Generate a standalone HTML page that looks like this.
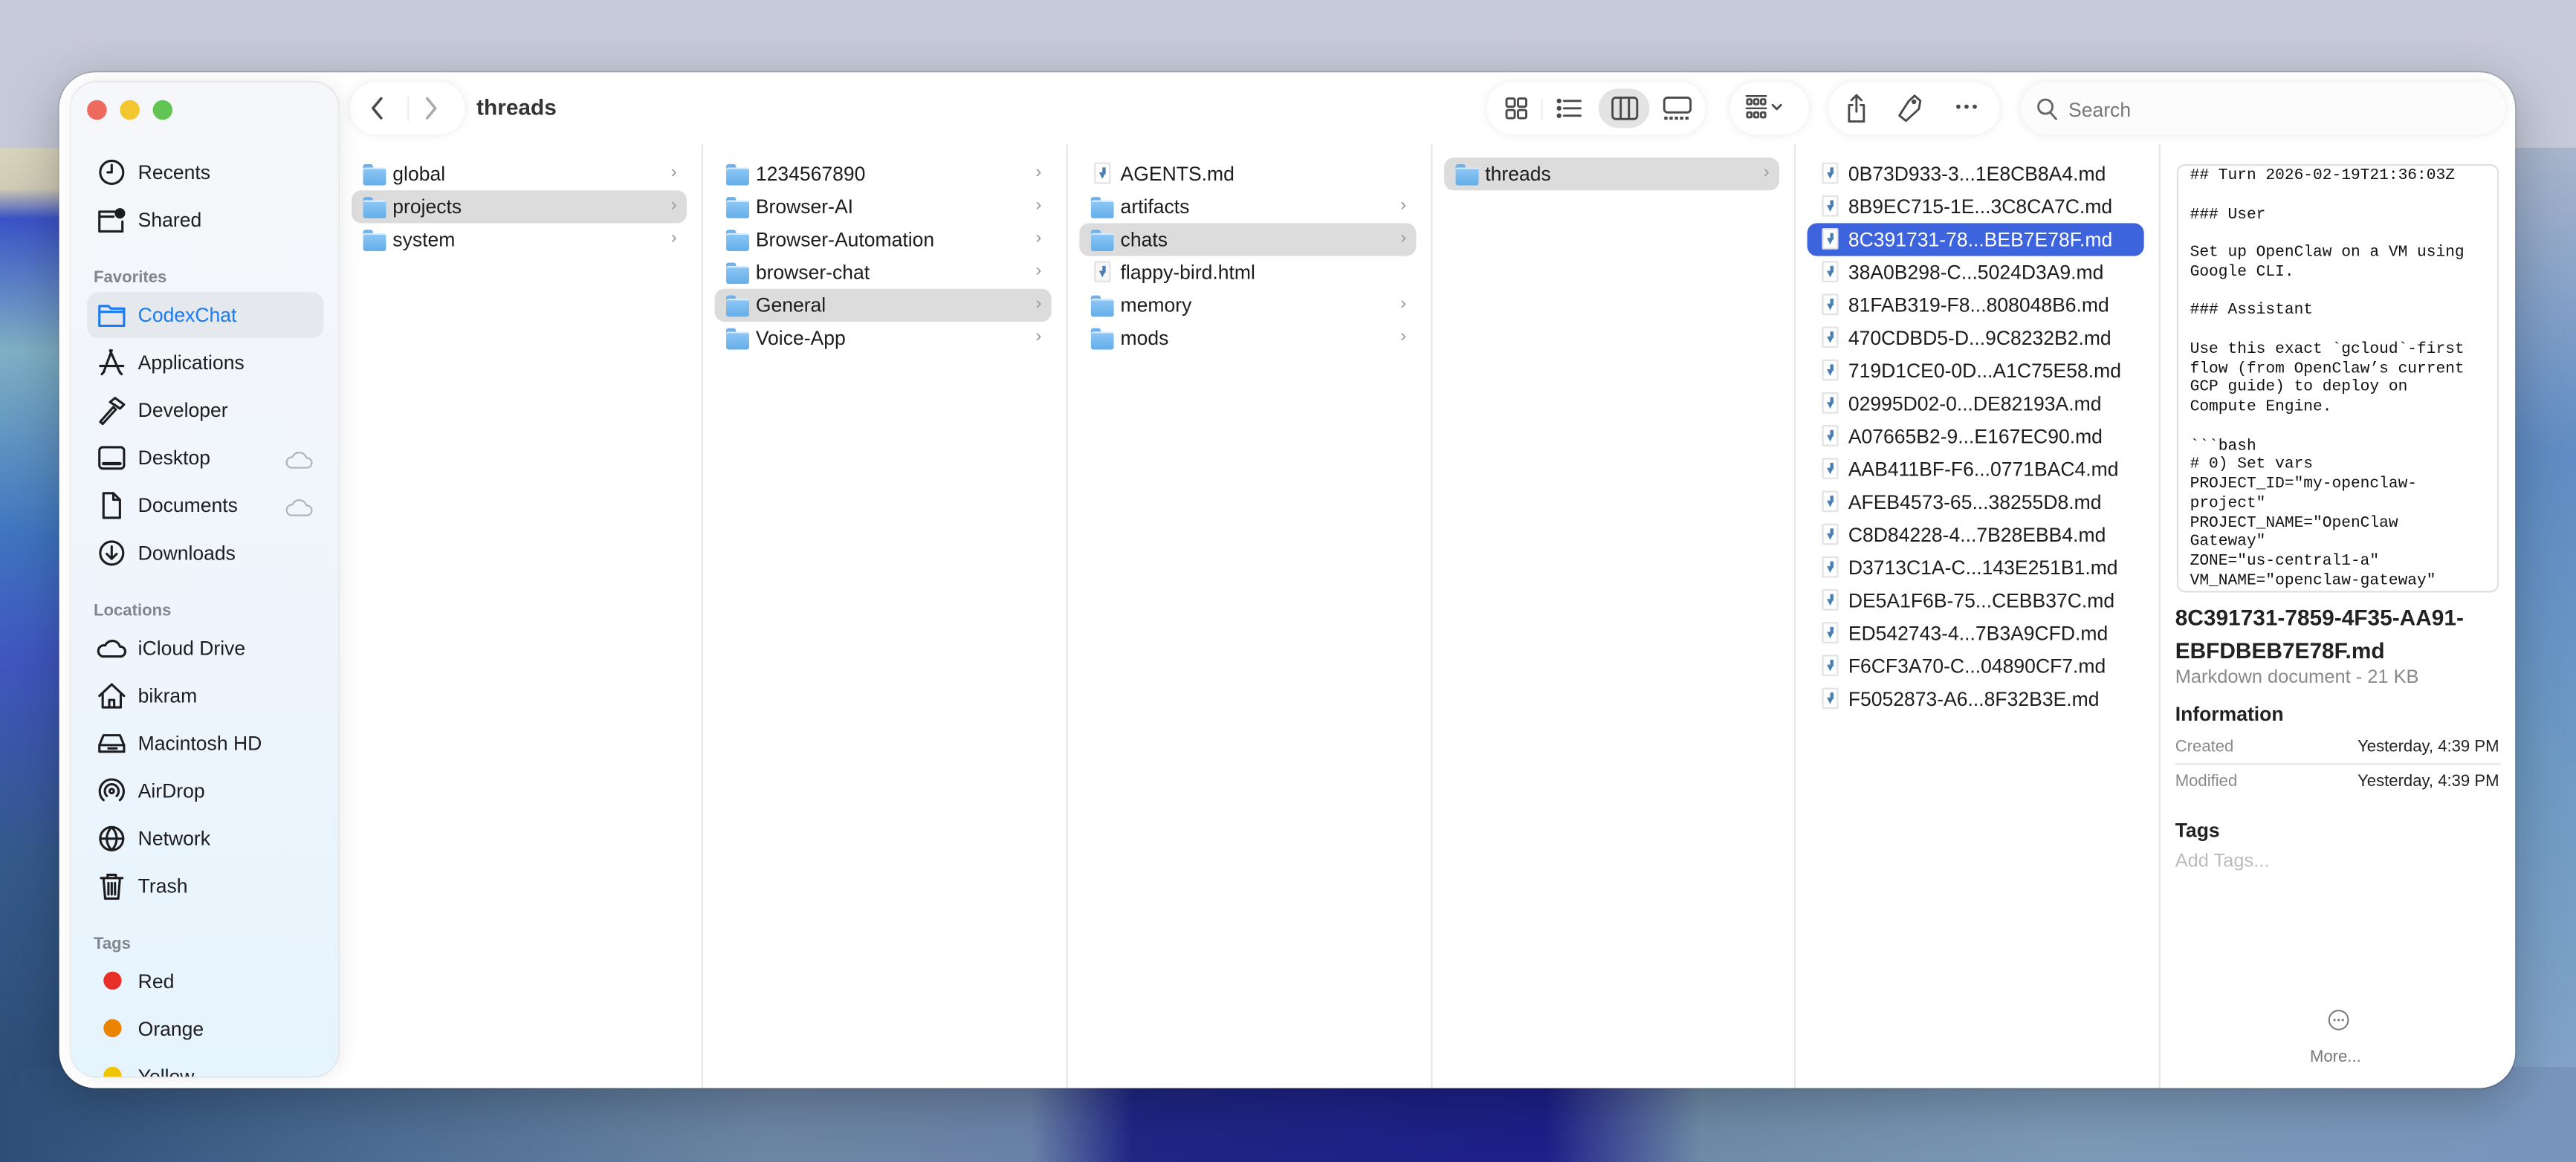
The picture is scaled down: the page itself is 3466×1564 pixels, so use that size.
<!DOCTYPE html>
<html><head><meta charset="utf-8">
<style>
*{margin:0;padding:0;box-sizing:border-box}
html,body{width:3466px;height:1564px;overflow:hidden}
body{background:#c4c8d6;font-family:"Liberation Sans",sans-serif}
#s{position:absolute;left:0;top:0;width:1568px;height:708px;transform:scale(2.2105,2.2090);transform-origin:0 0;overflow:hidden;
background:linear-gradient(180deg,#c7cad9 0%,#c3c7d6 30%,#9aa9bd 60%,#5f7896 85%,#6f8fb3 100%)}
.bgl{position:absolute;left:0;top:90px;width:60px;height:620px;background:linear-gradient(180deg,#d8d4bd 0,#cfcbb5 4%,#3a52c6 7%,#7fb0c4 20%,#3f75c0 38%,#3f56c0 50%,#35598a 70%,#2a4a70 100%)}
.bgr{position:absolute;left:1500px;top:90px;width:68px;height:620px;background:linear-gradient(180deg,#a9b5cc 0,#5f8cc4 30%,#6d9ac4 60%,#88a6c8 100%)}
.bgb{position:absolute;left:0;top:650px;width:1568px;height:60px;background:linear-gradient(90deg,#2c4e78 0,#4d6d93 15%,#6d86a4 30%,#6b82a8 40%,#1f2684 44%,#1e1f88 60%,#6e8aa6 66%,#7b98b6 80%,#7896bd 100%)}
.win{position:absolute;left:36px;top:44px;width:1495px;height:619px;background:#fff;border-radius:22px;box-shadow:0 0 1px rgba(0,0,0,.45),0 8px 30px rgba(0,0,0,.25);overflow:hidden}
.side{position:absolute;left:7px;top:6px;width:163px;height:606px;border-radius:16px;background:linear-gradient(180deg,#f6f7fa 0,#eef5fc 60%,#e6f4fe 100%);box-shadow:0 0 1px rgba(0,0,0,.2),2px 0 12px rgba(0,0,0,.08);overflow:hidden}
.t{position:absolute;font-size:12px;color:#1d1d1f;white-space:nowrap;line-height:14px}
.h{position:absolute;font-size:10px;font-weight:bold;color:#808590;white-space:nowrap}
.ic{position:absolute;width:18px;height:18px}
.ic svg{width:18px;height:18px;fill:none;stroke:#1d1d1f;stroke-width:1.4;stroke-linecap:round;stroke-linejoin:round}
.dot{position:absolute;width:11px;height:11px;border-radius:50%}
.col{position:absolute;top:44px;height:575px;border-left:1px solid #e6e6e6}
.row{position:absolute;left:7px;right:9px;height:20px;border-radius:6px}
.row.sel{background:#dcdcdc}
.row.blue{background:#3d63dd}
.row .n{position:absolute;left:25px;top:3px;font-size:12px;color:#1d1d1f;white-space:nowrap}
.row.blue .n{color:#fff}
.fo{position:absolute;left:7px;top:4px;width:14px;height:12px}
.fo:before{content:"";position:absolute;left:0;top:0;width:6px;height:3px;background:#6fb1ea;border-radius:1.5px 1.5px 0 0}
.fo:after{content:"";position:absolute;left:0;top:2px;width:14px;height:10px;background:linear-gradient(#8cc6f5,#64aee9);border-radius:1.5px;border-top:1px solid #d8ecfb}
.fi{position:absolute;left:9px;top:3px;width:10px;height:13px;background:#fff;border:1px solid #e2e2e2;border-radius:1px}
.fi:after{content:"";position:absolute;left:2px;top:5px;border-left:2.5px solid transparent;border-right:2.5px solid transparent;border-top:4px solid #4b7fb3}
.fi:before{content:"";position:absolute;left:3.5px;top:2px;width:2px;height:4px;background:#4b7fb3}
.ch{position:absolute;right:6px;top:3px;font-size:11px;color:#9a9a9a}
.pill{position:absolute;top:6px;height:32px;border-radius:16px;background:#fff;box-shadow:0 0 6px rgba(0,0,0,.09)}
.tb svg{position:absolute;fill:none;stroke:#4a4a4a;stroke-width:1.3;stroke-linecap:round;stroke-linejoin:round}
.mono{position:absolute;left:1289px;top:56px;width:196px;height:261px;border:1px solid #e0e0e0;border-radius:5px;overflow:hidden;font-family:"Liberation Mono","DejaVu Sans Mono",monospace;font-size:9.6px;line-height:11.75px;color:#111;padding:0 0 0 7px;white-space:pre}
</style></head><body><div id="s">
<div class="bgl"></div><div class="bgr"></div><div class="bgb"></div>
<div class="win">
 <div class="col" style="left:391px;width:222px">
  <div class="row" style="top:8px"><span class="fo"></span><span class="n">1234567890</span><span class="ch">›</span></div>
  <div class="row" style="top:28px"><span class="fo"></span><span class="n">Browser-AI</span><span class="ch">›</span></div>
  <div class="row" style="top:48px"><span class="fo"></span><span class="n">Browser-Automation</span><span class="ch">›</span></div>
  <div class="row" style="top:68px"><span class="fo"></span><span class="n">browser-chat</span><span class="ch">›</span></div>
  <div class="row sel" style="top:88px"><span class="fo"></span><span class="n">General</span><span class="ch">›</span></div>
  <div class="row" style="top:108px"><span class="fo"></span><span class="n">Voice-App</span><span class="ch">›</span></div>
 </div>
 <div class="col" style="left:613px;width:222px">
  <div class="row" style="top:8px"><span class="fi"></span><span class="n">AGENTS.md</span></div>
  <div class="row" style="top:28px"><span class="fo"></span><span class="n">artifacts</span><span class="ch">›</span></div>
  <div class="row sel" style="top:48px"><span class="fo"></span><span class="n">chats</span><span class="ch">›</span></div>
  <div class="row" style="top:68px"><span class="fi" style="background:#f6f6f6"></span><span class="n">flappy-bird.html</span></div>
  <div class="row" style="top:88px"><span class="fo"></span><span class="n">memory</span><span class="ch">›</span></div>
  <div class="row" style="top:108px"><span class="fo"></span><span class="n">mods</span><span class="ch">›</span></div>
 </div>
 <div class="col" style="left:835px;width:221px">
  <div class="row sel" style="top:8px"><span class="fo"></span><span class="n">threads</span><span class="ch">›</span></div>
 </div>
 <div class="col" style="left:1056px;width:222px">
  <div class="row" style="top:8px"><span class="fi"></span><span class="n">0B73D933-3...1E8CB8A4.md</span></div>
  <div class="row" style="top:28px"><span class="fi"></span><span class="n">8B9EC715-1E...3C8CA7C.md</span></div>
  <div class="row blue" style="top:48px"><span class="fi"></span><span class="n">8C391731-78...BEB7E78F.md</span></div>
  <div class="row" style="top:68px"><span class="fi"></span><span class="n">38A0B298-C...5024D3A9.md</span></div>
  <div class="row" style="top:88px"><span class="fi"></span><span class="n">81FAB319-F8...808048B6.md</span></div>
  <div class="row" style="top:108px"><span class="fi"></span><span class="n">470CDBD5-D...9C8232B2.md</span></div>
  <div class="row" style="top:128px"><span class="fi"></span><span class="n">719D1CE0-0D...A1C75E58.md</span></div>
  <div class="row" style="top:148px"><span class="fi"></span><span class="n">02995D02-0...DE82193A.md</span></div>
  <div class="row" style="top:168px"><span class="fi"></span><span class="n">A07665B2-9...E167EC90.md</span></div>
  <div class="row" style="top:188px"><span class="fi"></span><span class="n">AAB411BF-F6...0771BAC4.md</span></div>
  <div class="row" style="top:208px"><span class="fi"></span><span class="n">AFEB4573-65...38255D8.md</span></div>
  <div class="row" style="top:228px"><span class="fi"></span><span class="n">C8D84228-4...7B28EBB4.md</span></div>
  <div class="row" style="top:248px"><span class="fi"></span><span class="n">D3713C1A-C...143E251B1.md</span></div>
  <div class="row" style="top:268px"><span class="fi"></span><span class="n">DE5A1F6B-75...CEBB37C.md</span></div>
  <div class="row" style="top:288px"><span class="fi"></span><span class="n">ED542743-4...7B3A9CFD.md</span></div>
  <div class="row" style="top:308px"><span class="fi"></span><span class="n">F6CF3A70-C...04890CF7.md</span></div>
  <div class="row" style="top:328px"><span class="fi"></span><span class="n">F5052873-A6...8F32B3E.md</span></div>
 </div>
 <div class="col" style="left:1278px;width:217px"></div>
 <div class="col" style="left:170px;width:221px">
  <div class="row" style="top:8px"><span class="fo"></span><span class="n">global</span><span class="ch">›</span></div>
  <div class="row sel" style="top:28px"><span class="fo"></span><span class="n">projects</span><span class="ch">›</span></div>
  <div class="row" style="top:48px"><span class="fo"></span><span class="n">system</span><span class="ch">›</span></div>
 </div>
 <div style="position:absolute;left:170px;top:44px;width:1px;height:575px;background:#fff"></div>

 <div class="mono">## Turn 2026-02-19T21:36:03Z

### User

Set up OpenClaw on a VM using
Google CLI.

### Assistant

Use this exact &#96;gcloud&#96;-first
flow (from OpenClaw&#8217;s current
GCP guide) to deploy on
Compute Engine.

&#96;&#96;&#96;bash
# 0) Set vars
PROJECT_ID="my-openclaw-
project"
PROJECT_NAME="OpenClaw
Gateway"
ZONE="us-central1-a"
VM_NAME="openclaw-gateway"</div>
 <div class="t" style="left:1288px;top:323px;font-size:13.5px;font-weight:bold;line-height:20px;color:#222">8C391731-7859-4F35-AA91-<br>EBFDBEB7E78F.md</div>
 <div class="t" style="left:1288px;top:362px;font-size:11.5px;color:#8a8a8a">Markdown document - 21 KB</div>
 <div class="t" style="left:1288px;top:384px;font-size:12px;font-weight:bold;color:#222">Information</div>
 <div class="t" style="left:1288px;top:405px;font-size:10px;color:#8a8a8a">Created</div>
 <div class="t" style="left:1399px;top:405px;font-size:10px;color:#222">Yesterday, 4:39 PM</div>
 <div style="position:absolute;left:1288px;top:421px;width:198px;height:1px;background:#e6e6e6"></div>
 <div class="t" style="left:1288px;top:426px;font-size:10px;color:#8a8a8a">Modified</div>
 <div class="t" style="left:1399px;top:426px;font-size:10px;color:#222">Yesterday, 4:39 PM</div>
 <div class="t" style="left:1288px;top:455px;font-size:12px;font-weight:bold;color:#222">Tags</div>
 <div class="t" style="left:1288px;top:474px;font-size:11.5px;color:#bbb">Add Tags...</div>
 <svg style="position:absolute;left:1381px;top:571px" width="13" height="13" viewBox="0 0 13 13"><circle cx="6.5" cy="6.5" r="5.8" fill="none" stroke="#777" stroke-width=".9"/><circle cx="4" cy="6.5" r=".7" fill="#777"/><circle cx="6.5" cy="6.5" r=".7" fill="#777"/><circle cx="9" cy="6.5" r=".7" fill="#777"/></svg>
 <div class="t" style="left:1370px;top:594px;font-size:10px;color:#777">More...</div>

 <div class="tb">
 <div class="pill" style="left:177px;width:70px"></div>
 <svg style="left:188px;top:14px" width="12" height="16" viewBox="0 0 12 16"><path d="M8 2 L3 8 L8 14" stroke-width="1.6"/></svg>
 <div style="position:absolute;left:212px;top:15px;width:1px;height:15px;background:#eee"></div>
 <svg style="left:220px;top:14px" width="12" height="16" viewBox="0 0 12 16"><path d="M4 2 L9 8 L4 14" stroke="#aaa" stroke-width="1.6"/></svg>
 <div class="t" style="left:254px;top:15px;font-size:13.5px;font-weight:bold;color:#333">threads</div>

 <div class="pill" style="left:869px;width:133px"></div>
 <svg style="left:879px;top:14px" width="16" height="16" viewBox="0 0 16 16"><rect x="2" y="2" width="5" height="5" rx="1"/><rect x="9" y="2" width="5" height="5" rx="1"/><rect x="2" y="9" width="5" height="5" rx="1"/><rect x="9" y="9" width="5" height="5" rx="1"/></svg>
 <div style="position:absolute;left:902px;top:16px;width:1px;height:13px;background:#eee"></div>
 <svg style="left:910px;top:14px" width="18" height="16" viewBox="0 0 18 16"><circle cx="3" cy="3.5" r=".8" fill="#4a4a4a"/><circle cx="3" cy="8" r=".8" fill="#4a4a4a"/><circle cx="3" cy="12.5" r=".8" fill="#4a4a4a"/><path d="M6 3.5H16M6 8H16M6 12.5H16"/></svg>
 <div style="position:absolute;left:937px;top:10px;width:31px;height:24px;border-radius:12px;background:#e3e3e3"></div>
 <svg style="left:944px;top:14px" width="18" height="16" viewBox="0 0 18 16"><rect x="1.5" y="1.5" width="15" height="13" rx="2"/><path d="M6.5 1.5V14.5M11.5 1.5V14.5"/></svg>
 <svg style="left:975px;top:14px" width="20" height="16" viewBox="0 0 20 16"><rect x="2" y="1.5" width="16" height="9" rx="2"/><path d="M2 14H18" stroke-dasharray="2 1.2" stroke-width="1.8" stroke-linecap="butt"/></svg>

 <div class="pill" style="left:1017px;width:48px"></div>
 <svg style="left:1025px;top:13px" width="32" height="18" viewBox="0 0 32 18"><path d="M2 1.5H14M2 9H14" stroke-width="1.1"/><rect x="2.5" y="3.5" width="2.6" height="3" rx=".6"/><rect x="6.7" y="3.5" width="2.6" height="3" rx=".6"/><rect x="10.9" y="3.5" width="2.6" height="3" rx=".6"/><rect x="2.5" y="11.5" width="2.6" height="3" rx=".6"/><rect x="6.7" y="11.5" width="2.6" height="3" rx=".6"/><rect x="10.9" y="11.5" width="2.6" height="3" rx=".6"/><path d="M18 7 L20.5 9.5 L23 7"/></svg>

 <div class="pill" style="left:1077px;width:104px"></div>
 <svg style="left:1086px;top:12px" width="16" height="20" viewBox="0 0 16 20"><path d="M8 2V12M5 5L8 2L11 5M5.5 8H3.5V18H12.5V8H10.5"/></svg>
 <svg style="left:1118px;top:12px" width="18" height="20" viewBox="0 0 18 20"><path d="M10 2L14 4.5V9.5L7.5 18L3 15.5L7 6Z" transform="rotate(10 9 10)"/><circle cx="11" cy="6" r=".8" fill="#4a4a4a"/></svg>
 <svg style="left:1153px;top:18px" width="16" height="6" viewBox="0 0 16 6"><circle cx="3" cy="3" r="1.3" fill="#4a4a4a" stroke="none"/><circle cx="8" cy="3" r="1.3" fill="#4a4a4a" stroke="none"/><circle cx="13" cy="3" r="1.3" fill="#4a4a4a" stroke="none"/></svg>

 <div class="pill" style="left:1194px;width:295px;background:#fcfcfc"></div>
 <svg style="left:1203px;top:15px" width="14" height="15" viewBox="0 0 14 15"><circle cx="6" cy="6" r="4.3" stroke="#666"/><path d="M9 9.5L12.5 13.5" stroke="#666"/></svg>
 <div class="t" style="left:1223px;top:16px;font-size:12px;color:#777">Search</div>
 </div>

 <div class="side">
  <div class="dot" style="left:10px;top:11px;width:12px;height:12px;background:#ec6a5e"></div>
  <div class="dot" style="left:30px;top:11px;width:12px;height:12px;background:#f2c62f"></div>
  <div class="dot" style="left:50px;top:11px;width:12px;height:12px;background:#61c554"></div>

  <div class="ic" style="left:16px;top:46px"><svg viewBox="0 0 18 18"><circle cx="9" cy="9" r="7"/><path d="M9 4.5V9H6.5"/></svg></div><div class="t" style="left:41px;top:48px">Recents</div>
  <div class="ic" style="left:16px;top:75px"><svg viewBox="0 0 18 18"><path d="M11 4H1.5V16H15.5V10M1.5 7H10"/><circle cx="14" cy="5" r="2.5" fill="#1d1d1f"/></svg></div><div class="t" style="left:41px;top:77px">Shared</div>
  <div class="h" style="left:14px;top:114px">Favorites</div>
  <div style="position:absolute;left:10px;top:128px;width:144px;height:28px;border-radius:7px;background:#e5e8ec"></div>
  <div class="ic" style="left:16px;top:133px"><svg viewBox="0 0 18 18" style="stroke:#1a7bf2"><path d="M1.5 3.5H7L8.5 5H16.5V15.5H1.5ZM1.5 7H16.5"/></svg></div><div class="t" style="left:41px;top:135px;color:#1a7bf2">CodexChat</div>
  <div class="ic" style="left:16px;top:162px"><svg viewBox="0 0 18 18"><path d="M9 1.5L4 15M8 1.5L14 15M2 11H16M3 16L4.5 14M15 16L13.5 14"/></svg></div><div class="t" style="left:41px;top:164px">Applications</div>
  <div class="ic" style="left:16px;top:191px"><svg viewBox="0 0 18 18"><path d="M2 16L10 7L11.5 8.5L3.5 17.3Z M8 4L11 1.5L16.5 5.5L14 8L12 6.5Z"/></svg></div><div class="t" style="left:41px;top:193px">Developer</div>
  <div class="ic" style="left:16px;top:220px"><svg viewBox="0 0 18 18"><rect x="1.5" y="2.5" width="15" height="13" rx="2"/><path d="M4 12.5H14" stroke-width="2"/></svg></div><div class="t" style="left:41px;top:222px">Desktop</div>
  <div class="ic" style="left:130px;top:221px"><svg viewBox="0 0 18 18" style="stroke:#b0b4ba;stroke-width:1"><path d="M4 14H14A3 3 0 0 0 13.5 8A4.5 4.5 0 0 0 5 7.5A3.3 3.3 0 0 0 4 14Z"/></svg></div>
  <div class="ic" style="left:16px;top:249px"><svg viewBox="0 0 18 18"><path d="M4 1.5H10L14 5.5V16.5H4ZM10 1.5V5.5H14"/></svg></div><div class="t" style="left:41px;top:251px">Documents</div>
  <div class="ic" style="left:130px;top:250px"><svg viewBox="0 0 18 18" style="stroke:#b0b4ba;stroke-width:1"><path d="M4 14H14A3 3 0 0 0 13.5 8A4.5 4.5 0 0 0 5 7.5A3.3 3.3 0 0 0 4 14Z"/></svg></div>
  <div class="ic" style="left:16px;top:278px"><svg viewBox="0 0 18 18"><circle cx="9" cy="9" r="7"/><path d="M9 5V12.5M6 9.5L9 12.5L12 9.5"/></svg></div><div class="t" style="left:41px;top:280px">Downloads</div>
  <div class="h" style="left:14px;top:317px">Locations</div>
  <div class="ic" style="left:16px;top:336px"><svg viewBox="0 0 18 18"><path d="M3.5 14H14.5A3 3 0 0 0 14 8A4.8 4.8 0 0 0 5 7.3A3.4 3.4 0 0 0 3.5 14Z"/></svg></div><div class="t" style="left:41px;top:338px">iCloud Drive</div>
  <div class="ic" style="left:16px;top:365px"><svg viewBox="0 0 18 18"><path d="M1.5 9L9 2L16.5 9M3.5 7.5V16H14.5V7.5M7.5 16V11.5H10.5V16"/></svg></div><div class="t" style="left:41px;top:367px">bikram</div>
  <div class="ic" style="left:16px;top:394px"><svg viewBox="0 0 18 18"><path d="M4 4H14L16.5 10V14H1.5V10ZM1.5 10H16.5M7 12H12" /></svg></div><div class="t" style="left:41px;top:396px">Macintosh HD</div>
  <div class="ic" style="left:16px;top:423px"><svg viewBox="0 0 18 18"><circle cx="9" cy="9" r="1.3"/><path d="M6 12A4.2 4.2 0 1 1 12 12M4 14.5A7.3 7.3 0 1 1 14 14.5"/></svg></div><div class="t" style="left:41px;top:425px">AirDrop</div>
  <div class="ic" style="left:16px;top:452px"><svg viewBox="0 0 18 18"><circle cx="9" cy="9" r="7"/><path d="M2 9H16M9 2C5 6 5 12 9 16M9 2C13 6 13 12 9 16"/></svg></div><div class="t" style="left:41px;top:454px">Network</div>
  <div class="ic" style="left:16px;top:481px"><svg viewBox="0 0 18 18"><path d="M2.5 4H15.5M6.5 4V2H11.5V4M4 4L5 16.5H13L14 4M7 7V14M9 7V14M11 7V14"/></svg></div><div class="t" style="left:41px;top:483px">Trash</div>
  <div class="h" style="left:14px;top:520px">Tags</div>
  <div class="dot" style="left:20px;top:542px;background:#e8302a"></div><div class="t" style="left:41px;top:541px">Red</div>
  <div class="dot" style="left:20px;top:571px;background:#e98300"></div><div class="t" style="left:41px;top:570px">Orange</div>
  <div class="dot" style="left:20px;top:600px;background:#f0c400"></div><div class="t" style="left:41px;top:599px">Yellow</div>
 </div>
</div>
</div></body></html>
